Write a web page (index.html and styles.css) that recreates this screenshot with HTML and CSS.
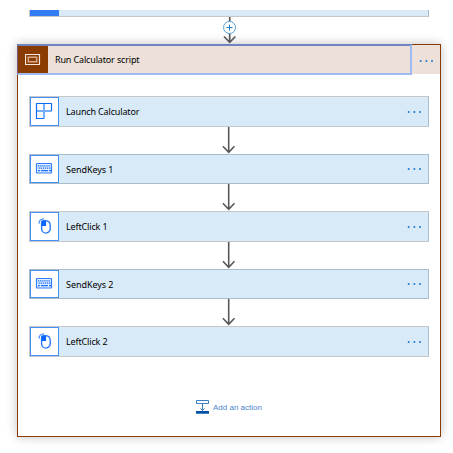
FILE: index.html
```
<!DOCTYPE html>
<html lang="en">
<head>
<meta charset="utf-8">
<title>Run Calculator script</title>
<link rel="stylesheet" href="styles.css">
</head>
<body>
<svg class="defs" width="0" height="0" aria-hidden="true">
  <symbol id="arrow" viewBox="0 0 14 27"><path d="M6.7 0V25.2M.9 19.3l5.8 6 5.8-6" fill="none" stroke="#58585a" stroke-width="1.6"/></symbol>
  <symbol id="launch" viewBox="0 0 27 27"><path d="M13 5.5v15M5.5 13h15" fill="none" stroke="#75aeff" stroke-width="2"/><path d="M13 20.5H5.5v-15h15V13" fill="none" stroke="#0f6bff" stroke-width="1.2"/></symbol>
  <symbol id="keys" viewBox="0 0 27 27"><rect x="5.5" y="7.5" width="15" height="9.5" rx=".5" fill="#e3eeff" stroke="#2e7eff" stroke-width="1.2"/><path d="M7 9.8h12M7.6 12.2h12" stroke="#0f6bff" stroke-width="1.3" stroke-dasharray="1.3 .8"/><path d="M7 14.6h2m1 0h7m1 0h2" stroke="#1b70ff" stroke-width="1.2"/></symbol>
  <symbol id="mouse" viewBox="0 0 27 27"><path d="M14 7.6h-2c-1 .3-1.4 1-1.4 2.2v6a4.3 4.3 0 0 0 8.6 0v-3.5c0-3-1.9-4.7-5.2-4.7z" fill="#fff" stroke="#2678ff" stroke-width="1.4"/><path d="M10.5 8h4.6v5h-4.6z" fill="#0866ff"/><path d="M8.2 10.6c-.4-2.8 1.6-4.8 5-4.8" fill="none" stroke="#448cff" stroke-width="1.3"/></symbol>
  <symbol id="dots" viewBox="0 0 16 4"><g fill="#1b79d1"><circle cx="1.7" cy="2" r="1"/><circle cx="7.4" cy="2" r="1"/><circle cx="13" cy="2" r="1"/></g></symbol>
</svg>
<main class="flow">
  <div class="previous"><span></span></div>
  <div class="insert">
    <svg width="14" height="27" viewBox="0 0 14 27"><path d="M6.7 0v25.3M1 19.5l5.7 5.8 5.7-5.8" fill="none" stroke="#58585a" stroke-width="1.7"/><circle cx="6.5" cy="10.5" r="6" fill="#fff" stroke="#59a0d6"/><path d="M3.5 10.5h6m-3-3v6" stroke="#247fc8"/></svg>
  </div>
  <section class="scope">
    <header class="head">
      <div class="title"><span class="scope-icon"><svg width="16" height="12" viewBox="0 0 16 12"><path d="M.5.5h14v10H.5z" fill="none" stroke="#f4e6df" stroke-width="1.2"/><path d="M3.3 3.3h8.4v4.4H3.3z" fill="none" stroke="#d7aa91" stroke-width="1.5"/></svg></span><span>Run Calculator script</span></div>
      <svg class="dots"><use href="#dots"/></svg>
    </header>
    <div class="steps">
      <div class="card"><span class="icon"><svg><use href="#launch"/></svg></span><span class="name">Launch Calculator</span><svg class="dots"><use href="#dots"/></svg></div>
      <svg class="arrow"><use href="#arrow"/></svg>
      <div class="card short"><span class="icon"><svg><use href="#keys"/></svg></span><span class="name">SendKeys 1</span><svg class="dots"><use href="#dots"/></svg></div>
      <svg class="arrow"><use href="#arrow"/></svg>
      <div class="card"><span class="icon"><svg><use href="#mouse"/></svg></span><span class="name">LeftClick 1</span><svg class="dots"><use href="#dots"/></svg></div>
      <svg class="arrow"><use href="#arrow"/></svg>
      <div class="card short"><span class="icon"><svg><use href="#keys"/></svg></span><span class="name">SendKeys 2</span><svg class="dots"><use href="#dots"/></svg></div>
      <svg class="arrow"><use href="#arrow"/></svg>
      <div class="card"><span class="icon"><svg><use href="#mouse"/></svg></span><span class="name">LeftClick 2</span><svg class="dots"><use href="#dots"/></svg></div>
    </div>
    <div class="add"><svg width="13" height="14" viewBox="0 0 13 14"><path d="M.5.5h12v3H.5zM6.5 4v6.5M4.5 8.5l2 2 2-2" fill="none" stroke="#387fc5"/><path d="M0 11h13v2H0z" fill="#0650a3"/><path d="M0 13h13v1H0z" fill="#3e80c1"/></svg><span>Add an action</span></div>
  </section>
</main>
</body>
</html>
```
FILE: styles.css
```
* { box-sizing: border-box; }
body { margin: 0; background: #fff; font: 9px/12px "Noto Sans", "Open Sans", sans-serif; color: #000; }
svg { display: block; flex: none; }
.defs { position: absolute; }
.flow { width: 453px; height: 453px; padding: 10px 12px 0 17px; overflow: hidden; }
.previous { width: 400px; height: 7px; margin-left: 12px; background: #d8eaf8; border: solid #c5c7c9; border-width: 0 1px 1px; border-right-color: #a9bccb; }
.previous span { display: block; width: 29px; height: 6px; background: #337bf3; }
.insert { height: 27px; padding-left: 206px; position: relative; z-index: 1; }
.scope { width: 424px; height: 393px; border: 1px solid #8a3b00; background: #fff; box-shadow: 0 0 10px rgba(0,0,0,.24); }
.head { height: 29px; display: flex; align-items: center; background: #ede0d9; }
.title { width: 395px; height: 31px; margin: 0 0 0 -1px; flex: none; display: flex; align-items: center; gap: 7px; border: solid #9dbaf3; border-width: 2px 2px 2px 1px; border-top-color: #7184bd; border-left-color: #765a79; letter-spacing: -.15px; }
.scope-icon { width: 30px; height: 27px; flex: none; display: flex; align-items: center; justify-content: center; background: #8a3b00; }
.dots { width: 16px; height: 4px; }
.head .dots { margin: 2px 0 0 7px; }
.steps { padding: 22px 11px 0; display: flex; flex-direction: column; }
.card { height: 31px; display: flex; align-items: center; background: #d8eaf8; border: 1px solid #c5c7c9; border-right-color: #a9bccb; }
.card.short { height: 30px; border-color: #a9bccb; }
.icon { width: 29px; height: 29px; flex: none; background: #fff; border: 1px solid #438ff4; }
.short .icon { height: 28px; }
.icon svg { width: 27px; height: 27px; }
.name { margin-left: 7px; letter-spacing: -.15px; }
.short .name { letter-spacing: -.05px; padding-top: 1px; }
.card .dots { margin-left: auto; margin-right: 5px; }
.arrow { width: 14px; height: 27px; margin-left: 193px; }
.add { margin-top: 43px; padding-left: 178px; display: flex; align-items: center; gap: 4px; font-family: "Liberation Sans", sans-serif; font-size: 8px; color: #4b86cc; }
.add span { padding-top: 2px; }
```
